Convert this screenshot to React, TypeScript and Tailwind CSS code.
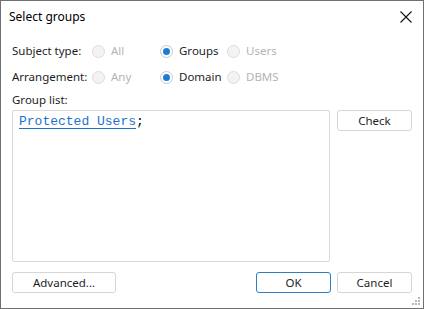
import type { ReactNode } from "react";

function Radio({ label, checked, disabled }: { label: string; checked?: boolean; disabled?: boolean }) {
  return (
    <div className="flex items-center gap-[6px]">
      <span
        className={
          "flex h-[13px] w-[13px] items-center justify-center rounded-full border " +
          (disabled ? "border-[#dcdcdc] bg-[#f3f3f3]" : "border-[#c8c8c8] bg-white")
        }
      >
        {checked && <span className="h-[7px] w-[7px] rounded-full bg-[#1a7fd4]" />}
      </span>
      <span className={disabled ? "text-[#b4b4b4]" : "text-[#1e1e1e]"}>{label}</span>
    </div>
  );
}

function Btn({ children, primary, w }: { children: ReactNode; primary?: boolean; w: string }) {
  return (
    <div
      className={
        "flex h-[21px] items-center justify-center rounded-[3px] border bg-white text-[#1e1e1e] " +
        (primary ? "border-[#2c7fc4]" : "border-[#d6d6d6]") +
        " " +
        w
      }
    >
      {children}
    </div>
  );
}

function OptionRow({ title, opts }: { title: string; opts: [string, boolean, boolean][] }) {
  return (
    <div className="flex h-[26px] items-center">
      <span className="w-[80px] shrink-0">{title}</span>
      <div className="w-[68px]">
        <Radio label={opts[0][0]} checked={opts[0][1]} disabled={opts[0][2]} />
      </div>
      <div className="w-[67px]">
        <Radio label={opts[1][0]} checked={opts[1][1]} disabled={opts[1][2]} />
      </div>
      <Radio label={opts[2][0]} checked={opts[2][1]} disabled={opts[2][2]} />
    </div>
  );
}

export default function App() {
  return (
    <div
      className="flex h-[309px] w-[424px] flex-col border border-[#707070] bg-white text-[11.5px] text-[#1e1e1e]"
      style={{ fontFamily: '"Noto Sans", "Open Sans", sans-serif' }}
    >
      <div className="flex h-[31px] items-center justify-between pl-[8px] pr-[10px]">
        <span className="text-[12px] text-black">Select groups</span>
        <svg width="12" height="12" viewBox="0 0 12 12" className="mr-[1px]">
          <path d="M0.5 0.5 L11.5 11.5 M11.5 0.5 L0.5 11.5" stroke="#111" strokeWidth="1.1" />
        </svg>
      </div>
      <div className="flex flex-1 flex-col px-[11px] pt-[6px]">
        <OptionRow
          title="Subject type:"
          opts={[
            ["All", false, true],
            ["Groups", true, false],
            ["Users", false, true],
          ]}
        />
        <OptionRow
          title="Arrangement:"
          opts={[
            ["Any", false, true],
            ["Domain", true, false],
            ["DBMS", false, true],
          ]}
        />
        <div className="mt-[1px] leading-[18px]">Group list:</div>
        <div className="mt-[1px] flex gap-[7px]">
          <div className="h-[152px] w-[318px] rounded-[2px] border border-[#d9d9d9] px-[6px] pt-[1px]">
            <span
              className="text-[13px] leading-[18px]"
              style={{ fontFamily: '"Liberation Mono", "Courier New", monospace' }}
            >
              <span className="text-[#1a73c8] underline decoration-[#1a73c8] underline-offset-[3px]">
                Protected Users
              </span>
              <span className="text-black">;</span>
            </span>
          </div>
          <Btn w="w-[75px]">Check</Btn>
        </div>
        <div className="mt-[10px] flex items-center">
          <Btn w="w-[104px]">Advanced...</Btn>
          <div className="flex-1" />
          <Btn primary w="w-[75px]">
            OK
          </Btn>
          <div className="w-[6px]" />
          <Btn w="w-[75px]">Cancel</Btn>
        </div>
      </div>
      <div className="flex justify-end pb-[2px] pr-[2px]">
        <svg width="9" height="9" viewBox="0 0 9 9">
          {[
            [6, 0],
            [3, 3],
            [6, 3],
            [0, 6],
            [3, 6],
            [6, 6],
          ].map(([x, y], i) => (
            <rect key={i} x={x} y={y} width="2" height="2" fill="#b8b8b8" />
          ))}
        </svg>
      </div>
    </div>
  );
}
